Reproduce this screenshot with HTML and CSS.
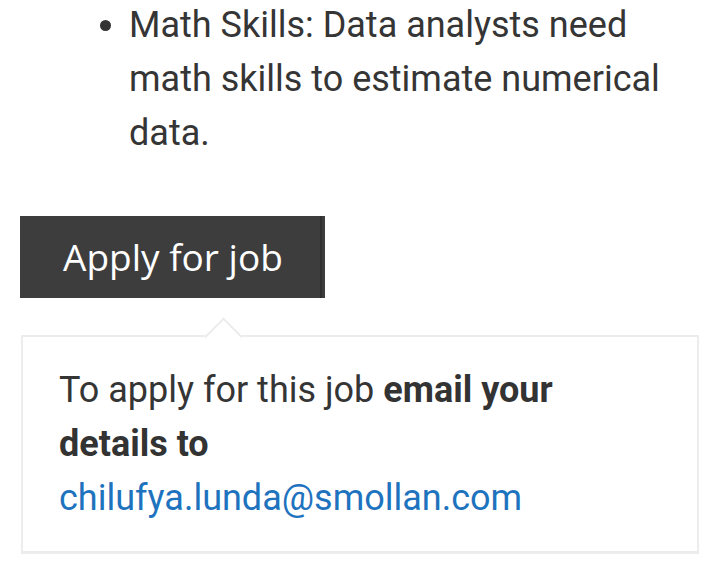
FILE: index.html
```html
<!DOCTYPE html>
<html lang="en">
<head>
<meta charset="utf-8">
<title>Apply for job</title>
<link rel="stylesheet" href="styles.css">
</head>
<body>
<div class="page">
  <ul class="skills">
    <li>Math Skills: Data analysts need math skills to estimate numerical data.</li>
  </ul>
  <div class="apply">
    <button class="apply-btn" type="button">Apply for job</button>
    <div class="apply-panel">
      <p>To apply for this job <strong>email your details to</strong> <a href="#">chilufya.lunda@smollan.com</a></p>
    </div>
  </div>
</div>
</body>
</html>
```
FILE: styles.css
```css
html, body {
  margin: 0;
  padding: 0;
  background: #ffffff;
}
.page {
  padding: 0 21px 0 20px;
  font-family: Roboto, "Liberation Sans", Arial, sans-serif;
  font-size: 36px;
  line-height: 54px;
  color: #353535;
}
.skills {
  margin: -2px 0 0 0;
  padding-left: 109px;
}
.skills li::marker {
  color: #333;
}
.apply {
  margin-top: 56px;
  display: flex;
  flex-direction: column;
  align-items: flex-start;
}
.apply-btn {
  font-family: "Open Sans", "Liberation Sans", Arial, sans-serif;
  font-size: 37px;
  line-height: 80px;
  height: 82px;
  width: 305px;
  padding: 0 0 0 43px;
  text-align: left;
  border: none;
  background: #3d3d3d;
  color: #ffffff;
  box-shadow: inset -3px 0 0 #3d3d3d, inset -5px 0 0 #303030;
  cursor: pointer;
}
.apply-panel {
  position: relative;
  margin: 37px 0 0 1px;
  align-self: stretch;
  border: 2px solid #ececec;
  border-bottom-width: 3px;
  background: #fff;
  padding: 26px 36px 26px;
  box-shadow: 0 1px 0 #f2f2f2;
}
.apply-panel::before {
  content: "";
  position: absolute;
  top: -14px;
  left: 187px;
  width: 25px;
  height: 25px;
  background: #fff;
  border-top: 2px solid #ececec;
  border-left: 2px solid #ececec;
  transform: rotate(45deg);
}
.apply-panel p {
  position: relative;
  margin: 0;
}
.apply-panel strong {
  font-weight: 700;
  color: #333;
}
.apply-panel a {
  color: #1e73be;
  text-decoration: none;
}
```
